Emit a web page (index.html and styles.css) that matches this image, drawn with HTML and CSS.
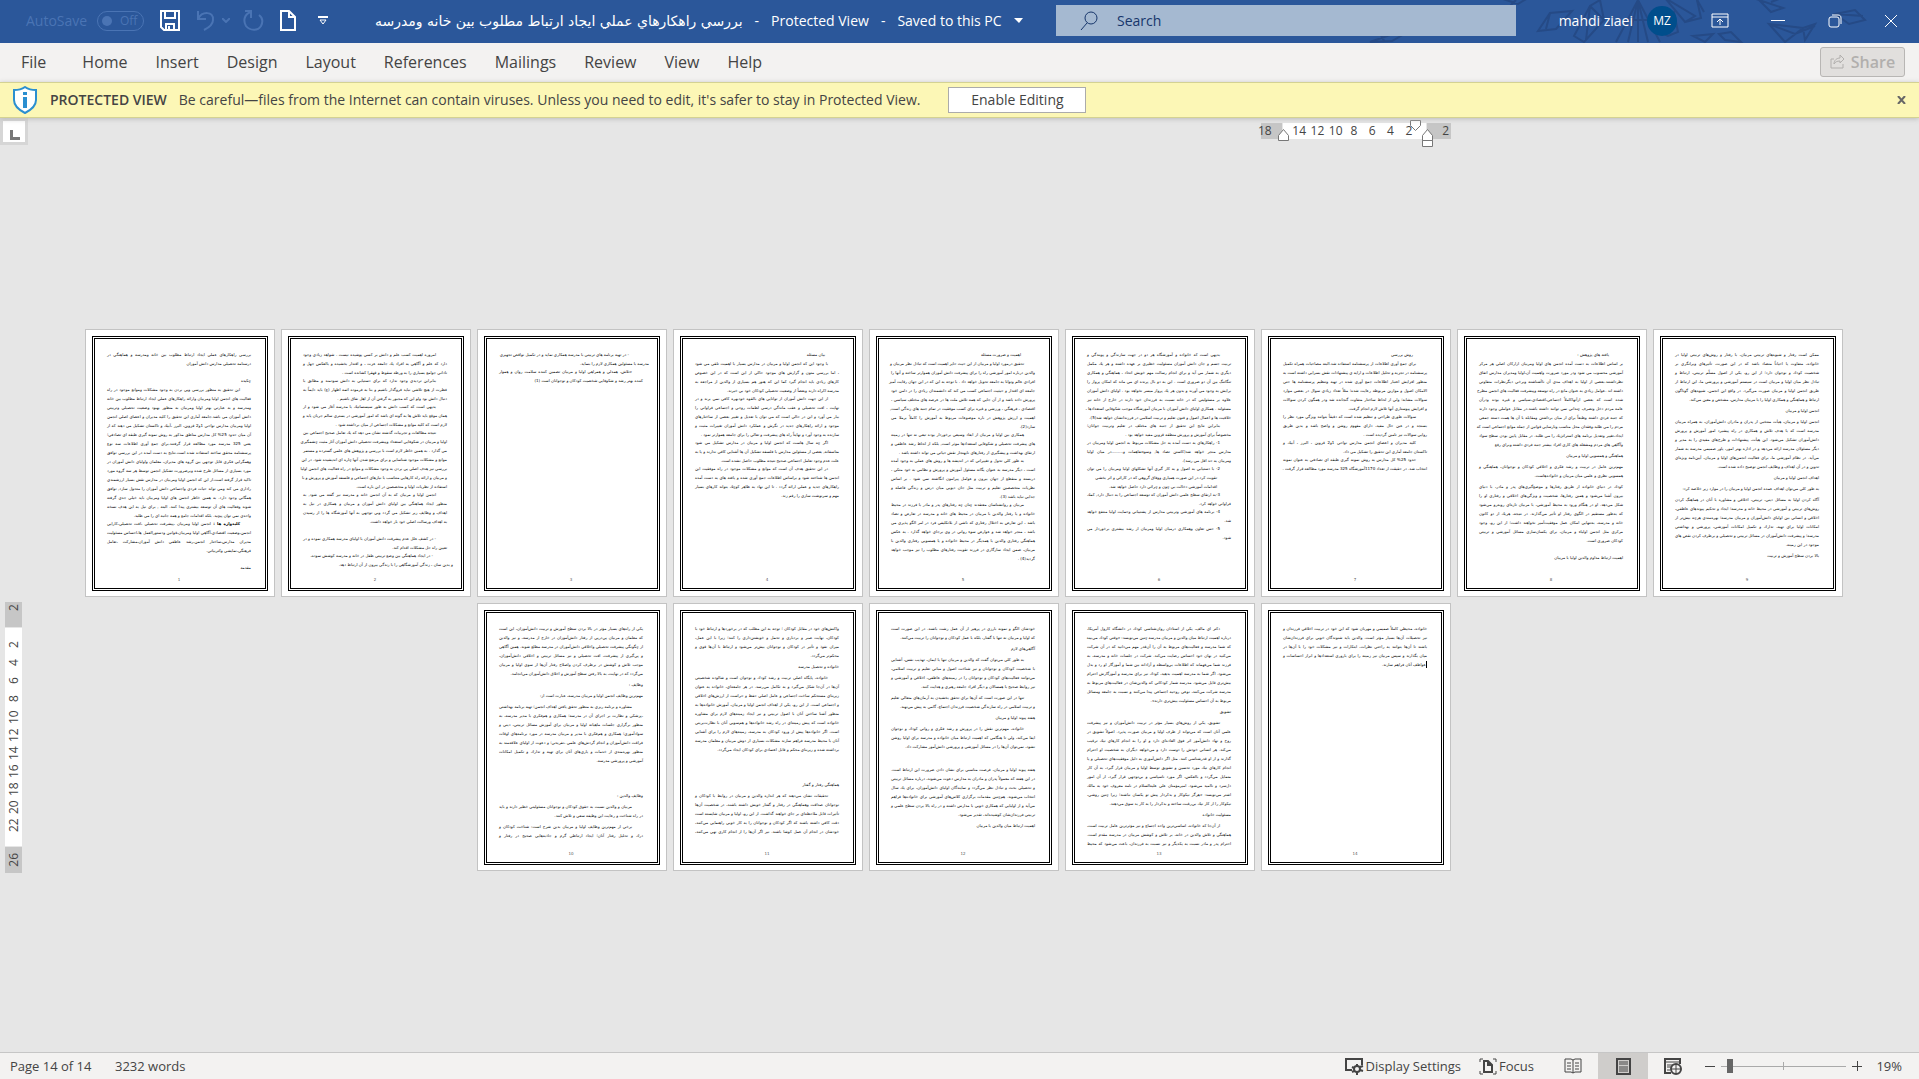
FILE: index.html
```html
<!DOCTYPE html>
<html lang="en">
<head>
<meta charset="utf-8">
<title>Word - Protected View</title>
<link rel="stylesheet" href="styles.css">
</head>
<body>
<header class="titlebar">
  <svg class="titlebar-art" width="340" height="43" viewBox="0 0 340 43" fill="none" stroke="#254a86" stroke-width="2">
    <path d="M4 42l20-7 16-2-14 8zM15 36l4 6M134 -2l18 6 10-6M142 8l8-8M172 31l12-18 22-2-16 18zM184 13l-4 16M184 13l22-2M208 36l16-30 10-6 4 20-20 22zM224 6l-4 34M224 6l14 14M250 42l22-42 22 42M272 0v42M262 42l10-42 10 42M262 20l20 0M290 30l18-18 4 20-10 4zM308 12l-8 22"/>
    <path d="M330 -2l8 14"/>
  </svg>
  <svg class="titlebar-art art-right" width="260" height="43" viewBox="0 0 260 43" fill="none" stroke="#254a86" stroke-width="2">
    <path d="M6 -2l30 18-10 6-20-24M26 22l16-4-4-18M60 34l12-2 10 10-16-2zM34 36l20-2-8 8zM94 -2l30 10-12 4-14-14M112 12l12-4M112 2l16-6M110 24l34 4-18 14zM110 24l26 10 20-8M144 28l12-4-10 16zM176 14l20-4 10 10-16 4zM176 14l28 2"/>
  </svg>
  <div class="quick">
    <span class="autosave">AutoSave</span>
    <button class="toggle" disabled><span class="knob"></span>Off</button>
    <button class="tool save" aria-label="Save"><svg width="20" height="21" viewBox="0 0 20 21" fill="none" stroke="#fff" stroke-width="2"><path d="M1 1h18v19H4l-3-3zM5 1v7h10V1M6 20v-6h8v6M9 20v-4"/></svg></button>
    <button class="tool undo" aria-label="Undo" disabled><svg width="20" height="21" viewBox="0 0 20 21" fill="none" stroke="#4a74b4" stroke-width="2"><path d="M2 1v8h8M2 9C6 1 18 1 17 10c0 5-5 8-9 10"/></svg></button>
    <button class="tool chev" aria-label="Undo list" disabled><svg width="8" height="5" viewBox="0 0 8 5" fill="none" stroke="#4a74b4" stroke-width="2"><path d="M0 0l4 4 4-4"/></svg></button>
    <button class="tool redo" aria-label="Repeat" disabled><svg width="21" height="21" viewBox="0 0 21 21" fill="none" stroke="#4a74b4" stroke-width="2"><path d="M2 1h6v7M8 2C1 4 0 11 3 16c4 5 12 5 15 0 2-4 2-8-2-11"/></svg></button>
    <button class="tool doc" aria-label="New"><svg width="16" height="21" viewBox="0 0 16 21" fill="none" stroke="#fff" stroke-width="2"><path d="M1 1h8l6 6v13H1zM9 1v6h6"/></svg></button>
    <button class="tool more" aria-label="Customize"><svg width="10" height="9" viewBox="0 0 10 9" fill="none" stroke="#fff" stroke-width="1"><path d="M0 1h10" stroke-width="2"/><path d="M2 4h6L5 8z"/></svg></button>
  </div>
  <button class="doc-title"><span dir="rtl" class="fa">بررسي راهكارهاي عملي ايجاد ارتباط مطلوب بين خانه ومدرسه</span><span>-</span><span>Protected View</span><span>-</span><span>Saved to this PC</span><svg width="9" height="5" viewBox="0 0 9 5" fill="#fff"><path d="M0 0h9L5 5z"/></svg></button>
  <label class="search"><svg width="18" height="20" viewBox="0 0 18 20" fill="none" stroke="#17366b" stroke-width="1"><circle cx="11" cy="7" r="6"/><path d="M7 12l-6 7"/></svg><input type="text" placeholder="Search" aria-label="Search"></label>
  <div class="account"><span>mahdi ziaei</span><span class="avatar">MZ</span></div>
  <div class="window">
    <button aria-label="Ribbon display options"><svg width="18" height="15" viewBox="0 0 18 15" fill="none" stroke="#fff" stroke-width="1"><path d="M1 1h16v13H1zM1 4h16M9 12V6M6 9l3-3 3 3"/></svg></button>
    <button aria-label="Minimize"><svg width="14" height="15" viewBox="0 0 14 15" fill="#fff"><path d="M0 7h14v1H0z"/></svg></button>
    <button aria-label="Restore"><svg width="14" height="14" viewBox="0 0 14 14" fill="none" stroke="#fff"><rect x="1" y="3" width="10" height="10" rx="2"/><path d="M4 1h6c2 0 3 1 3 3v6"/></svg></button>
    <button aria-label="Close"><svg width="14" height="14" viewBox="0 0 14 14" stroke="#fff"><path d="M1 1l12 12M13 1L1 13"/></svg></button>
  </div>
</header>

<nav class="tabs">
  <a href="#">File</a><a href="#">Home</a><a href="#">Insert</a><a href="#">Design</a><a href="#">Layout</a><a href="#">References</a><a href="#">Mailings</a><a href="#">Review</a><a href="#">View</a><a href="#">Help</a>
  <button class="share" disabled><svg width="15" height="15" viewBox="0 0 15 15" fill="none" stroke="#b1afad" stroke-width="1"><path d="M4 5H1v9h12v-4M4 10c0-4 3-6 6-6V1l4 4-4 4V7c-3 0-5 1-6 3z"/></svg>Share</button>
</nav>

<section class="notice">
  <svg width="24" height="28" viewBox="0 0 24 28"><path d="M12 1c3 2 7 3 11 3v10c0 6-5 10-11 13C6 24 1 20 1 14V4c4 0 8-1 11-3z" fill="#fff" stroke="#2b8fd0" stroke-width="2"/><path d="M12 11v11M12 6v3" stroke="#2b8fd0" stroke-width="4"/></svg>
  <strong>PROTECTED VIEW</strong>
  <span class="notice-text">Be careful—files from the Internet can contain viruses. Unless you need to edit, it's safer to stay in Protected View.</span>
  <button class="enable">Enable Editing</button>
  <button class="dismiss" aria-label="Close message"><svg width="9" height="8" viewBox="0 0 9 8" stroke="#666" stroke-width="2"><path d="M1 0l7 8M8 0L1 8"/></svg></button>
</section>

<main class="canvas">
  <div class="ruler-row">
    <button class="tab-kind" aria-label="Tab type"></button>
    <div class="ruler-track">
      <div class="hruler">
        <div class="margin left"><span>18</span></div>
        <div class="body"><span>14</span><span>12</span><span>10</span><span>8</span><span>6</span><span>4</span><span>2</span></div>
        <div class="margin right"><span>2</span></div>
        <svg class="marker" width="190" height="32" viewBox="0 0 190 32" fill="#fff" stroke="#777"><path d="M17.500 22.500v-5l5-6 5 6v5zM149.500 2.500h10v5l-5 5-5-5zM161.500 22.500v-5l5-6 5 6v5zM161.500 22.500h10v6h-10z"/></svg>
      </div>
    </div>
  </div>
  <div class="stage">
    <div class="workspace">
      <div class="vruler">
        <div class="margin top"><span>2</span></div>
        <div class="body"><span>2</span><span>4</span><span>6</span><span>8</span><span>10</span><span>12</span><span>14</span><span>16</span><span>18</span><span>20</span><span>22</span></div>
        <div class="margin bottom"><span>26</span></div>
      </div>
      <div class="pages" lang="fa">
<article class="sheet"><div class="frame">
<h2 class="wide">بررسي راهكارهاي عملي ايجاد ارتباط مطلوب بين خانه ومدرسه و هماهنگي در
<span>درسنامه تحصيلي مدارس دانش آموزان</span></h2>
<h2 class="blank">چكيده</h2>
<p>اين تحقيق به منظور بررسي وپي بردن به وجود مشكلات وموانع موجود در راه
فعاليت هاي انجمن اوليا ومربيان وارائه راهكارهاي عملي ايجاد ارتباط مطلوب بين خانه
ومدرسه و به عبارتي بهتر اوليا ومربيان به منظور بهبود وضعيت تحصيلي وتربيتي
دانش آموزان مي باشد.جامعه آماري اين تحقيق را كليه مديران و اعضاي اصلي انجمن
اوليا ومربيان مدارس نواحي 1و2 قزوين، البرز ،آبيك و تاكستان تشكيل مي دهند كه از
آن ميان حدود 25% كل مدارس مناطق مذكور به روش نمونه گيري طبقه اي تصادفي؛
يعني 325 مدرسه مورد مطالعه قرار گرفتند.براي جمع آوري اطلاعات سه نوع
پرسشنامه محقق ساخته استفاده شده است.نتايج به دست آمده در اين بررسي توافق
وهمگرايي فكري قابل توجهي بين گروه هاي مديران، معلمان واولياي دانش آموزان در
مورد بسياري از مسائل طرح شده وبرضرورت تشكيل انجمن توسط هر سه گروه مورد
تاكيد قرار گرفته است.از اين كه انجمن اوليا ومربيان در مدارس نقش بسيار ارزشمندي
راداري مي كند ومي تواند حيات فردي واجتماعي دانش آموزان را متحول سازد, توافق
همگاني وجود دارد. به همين خاطر انجمن هاي اوليا ومربيان بايد خيلي جدي گرفته
شوند وفعاليت هاي آن توسعه بيشتري پيدا كنند. البته , براي نيل به اين هدف نسخه
<span>واحدي نمي توان پيچيد. بلكه اقدامات جامع و همه جانبه اي را مي طلبد.</span></p>
<p><b>كليدواژه ها :</b> انجمن اوليا ومربيان ،پيشرفت تحصيلي ،افت تحصيلي،كارايي
انجمن،وضعيت اقتصادي،آگاهي اوليا ومربيان،قوانين ودستورالعمل ها،احساس مسئوليت
مديران مدارس،ساختار انجمن،رشد عاطفي دانش آموزان،مشاركت ،تعامل
<span>فرهنگي،نمايشي وكتربياتي.</span></p>
<h2 class="blank">مقدمه</h2>
<footer>1</footer></div></article>

<article class="sheet"><div class="frame">
<p>امروزه اهميت كسب علم و دانش بر كسي پوشيده نيست . شواهد زيادي وجود
دارد كه علم و آگاهي به افراد يك جامعه عزت ، و اقتدار بخشيده و بالعكس جهل و
<span>ناداني جوامع بسياري را به ورطه سقوط و قهقرا كشانده است .</span></p>
<p>بنابراين ترديدي وجود ندارد كه براي دستيابي به دانش سودمند و مطابق با
فطرت از هيچ تلاشي نبايد فروگذار باشيم و بنا به فرموده ائمه اطهار (ع) بايد دايماً به
<span>دنبال دانش بود ولو اين كه مجبور به گرفتن آن از اهل نفاق باشيم .</span></p>
<p>بديهي است كه كسب دانش به طور سيستماتيك با مدرسه آغاز مي شود و از
همان موقع بايد تلاش ها به گونه اي باشد كه امور آموزشي در بستري سالم جريان يابد و
<span>لازم است كه كليه موانع و مشكلات اجتماعي از ميان برداشته شود .</span></p>
<p>نتيجه مطالعات و تجربيات گذشته نشان مي دهد كه يك تعامل صحيح اجتماعي بين
اوليا و مربيان در شكوفايي استعداد وپيشرفت تحصيلي دانش آموزان آثار مثبت چشمگيري
مي گذارد . به همين خاطر لازم است با بررسي و پژوهش هاي علمي گسترده و مستمر
موانع و مشكلات موجود شناسايي و براي مرتفع شدن آنها چاره اي انديشيده شود. در اين
بررسي نيز هدف اصلي پي بردن به وجود مشكلات و موانع در راه فعاليت هاي انجمن اوليا
و مربيان و ارائه راه كارهايي متناسب با نيازهاي اجتماعي و فلسفه آموزش و پرورش و با
<span>استفاده از نظريات اوليا و متخصصين در اين باره است.</span></p>
<p>انجمن اوليا و مربيان كه به آن انجمن خانه و مدرسه نيز گفته مي شود, به
منظور ايجاد هماهنگي بين اولياي دانش آموزان و مربيان و همكاري در نيل به
اهداف و وظايف زير تشكيل مي گردد وبي توجهي به آنها آموزشگاه ها را از رسيدن
<span>به اهداف ورسالت اصلي خود باز خواهد داشت.</span></p>
<p class="blank">- در كشف علل عدم پيشرفت دانش آموزان با اولياي مدرسه همكاري نموده و در
<span>تعيين راه حل مشكلات اقدام كند.</span></p>
<p><span class="in">- در ايجاد هماهنگي بين وضع تربيتي طفل در خانه و مدرسه كوشش نموده،</span><span class="out">و بدين سان ، زندگي آموزشگاهي را با زندگي بيرون از آن ارتباط دهد.</span></p>
<footer>2</footer></div></article>

<article class="sheet"><div class="frame">
<p><span class="in">- در تهيه برنامه هاي تربيتي با مدرسه همكاري نمايد و در تكميل نواقص تجهيزي</span><span class="out">مدرسه با مسئولين همكاري لازم را بنمايد.</span></p>
<p>«تلاش، همدلي و همراهي اوليا و مربيان تضمين كننده سلامت روان و هموار
<span>كننده بهتر رشد و شكوفايي شخصيت كودكان و نوجوانان است (1)</span></p>
<footer>3</footer></div></article>

<article class="sheet"><div class="frame">
<h2 class="in">بيان مسئله</h2>
<p>با وجود اين كه انجمن اوليا و مربيان در مدارس بسيار با اهميت تلقي مي شود
، اما بررسي متون و گزارش هاي موجود حاكي از اين است كه در اين خصوص
كارهاي زيادي بايد انجام گيرد كما اين كه هنوز هم بسياري از والدين از مراجعه به
<span>مدرسه اكراه دارند وبعضاً از وضعيت تحصيلي كودكان خود بي خبرند.</span></p>
<p>از اين جهت دانش آموزان از توانايي هاي بالقوه خودبهره كافي نمي برند و در
نهايت ، افت تحصيلي و عقب ماندگي درسي لطمات روحي و اجتماعي فراواني را
ببار مي آورد و اين در حالي است كه مي توان با تعديل و تغيير بعضي از ساختارهاي
موجود و ارائه راهكارهاي جديد در نگرش و عملكرد دانش آموزان تغييرات مثبت و
<span>سازنده به وجود آورد و نهايتاً راه هاي پيشرفت و تعالي را براي جامعه هموارتر نمود .</span></p>
<p>اگر چه سال هاست كه انجمن اوليا و مربيان در مدارس تشكيل مي شود
متاسفانه, بعضي از مسئولين مدارس با فلسفه تشكيل آن ها آشنايي كافي ندارند و يا به
<span>علت عدم وجود تعامل اجتماعي صحيح نتيجه مطلوب حاصل نشده است.</span></p>
<p>در اين تحقيق هدف آن است كه موانع و مشكلات موجود در راه موفقيت اين
انجمن ها شناخته شود و براساس اطلاعات جمع آوري شده و يافته هاي به دست آمده
راهكارهاي جديد و عملي ارائه گردد . تا اين نهاد به ظاهر كوچك بتواند كارهاي بسيار
<span>مهم و سرنوشت سازي را رقم زند.</span></p>
<footer>4</footer></div></article>

<article class="sheet"><div class="frame">
<h2 class="in">اهميت و ضرورت مسئله</h2>
<p>تحقيق درمورد اوليا و مربيان از اين حيث حايز اهميت است كه تبادل نظر مربيان و
والدين درباره امور آموزشي راه را براي پيشرفت دانش آموزان هموارتر ساخته و آنها را
افرادي عالم وتوانا به جامعه تحويل خواهد داد . با توجه به اين كه در اين جهان رقابت آميز
جامعه اي اقتدار و حيثيت اجتماعي كسب مي كند كه دانشمندان زيادي را در دامن خود
پرورش داده باشد و از آن جايي كه همه تلاش ملت ها در عرصه هاي مختلف سياسي ،
اقتصادي ، فرهنگي ، ورزشي و غيره براي كسب موفقيت در تمام جنبه هاي زندگي است,
اهميت و ارزش پژوهش در باره موضوعات مربوط به آموزش را كاملاً برملا مي
<span>سازد(2).</span></p>
<p>همكاري بين اوليا و مربيان از ابعاد وسيعي برخوردار بوده تبعي نه تنها در زمينه
هاي پيشرفت تحصيلي و شكوفايي استعدادها موثر است, بلكه از لحاظ رشد عاطفي و
<span>ارتقاي بهداشت و پيشگيري از رفتارهاي نابهنجار نقش حياتي مي تواند داشته باشد .</span></p>
<p>به طور كلي تحول و تغييراتي كه در انديشه ها و روش هاي عملي به وجود آمده
است ، ديگر مدرسه به عنوان يگانه مسئول آموزش و پرورش و نظامي به خود متكي ،
دربسته و منقطع از جهان بيرون و عوامل پيرامون انگاشته نمي شود . بر اساس
نظريات متخصصين تعليم و تربيت مثل جان ديويي ميان درس و زندگي فاصله و
<span>جدايي نبايد باشد (3).</span></p>
<p>مربيان و روانشناسان معتقدند چنان چه رفتارهاي پدر و مادر با فرزند در محيط
خانواده و يا رفتار والدين با مربيان در محيط هاي خانه و مدرسه در تعارض و تضاد
باشد ، اين تعارض به اختلال رفتاري كه ناشي از بلاتكليفي فرد در امر الگو پذيري مي
باشد ، منجر خواهد شد و عوارض سوء رواني در وي برجاي خواهد گذارد . به عكس
هماهنگي رفتاري والدين با همديگر در محيط خانواده و يا همسويي رفتاري والدين با
مربيان، ضمن ايجاد سازگاري در فرزند تقويت رفتارهاي مطلوب را نيز موجب خواهد
<span>گرديد(4) .</span></p>
<footer>5</footer></div></article>

<article class="sheet"><div class="frame">
<p>بديهي است كه خانواده و آموزشگاه هر دو در جهت سازندگي و پويندگي و
تربيت جسم و جان دانش آموزان مسئوليت خطيري بر عهده داشته و هر يك مكمل
ديگري به شمار مي آيد و براي انجام رسالت مهم خويش اتحاد ، هماهنگي و همكاري
تنگاتنگ بين آن دو ضروري است . اين به دو بال پرنده اي مي ماند كه امكان پرواز را
برايش به وجود مي آورند و بدون هر يك پرواز ميسر نخواهد بود . اولياي دانش آموزان
علاوه بر مسئوليتي كه در خانه نسبت به فرزندان خود دارند در خارج از خانه نيز
مسئولند . همكاري اولياي دانش آموزان با مربيان آموزشگاه موجب شكوفايي استعدادها ،
<span>خلاقيت ها و اعمال اصول و فنون تعليم و تربيت اسلامي در فرزندانشان خواهد شد(5).</span></p>
<p>بنابراين نتايج اين تحقيق از جنبه هاي مختلف در تعليم وتربيت جوانان؛
<span>مخصوصاً براي آموزش و پرورش منطقه قزوين مفيد خواهد بود .</span></p>
<p>1- راهكارهاي به دست آمده به حل مشكلات مربوط به انجمن اوليا ومربيان در
مدارس منجر خواهد شد(كاستن تضاد ها, وسوءتفاهمات و.........در ميان اوليا
<span>ومربيان به حد اقل مي رسد).</span></p>
<p>2- با دستيابي به اصول و به كار گيري آنها تشكلهاي اوليا ومربيان را مي توان
<span class="in">تقويت كرد.در اين صورت همياري ووفاق گروهي كه در كارائي و اثر بخشي</span><span class="in">اقدامات آموزشي دخالت بي چون و چرائي دارد حاصل خواهد شد.</span></p>
<p>3-به ارتقاي سطح علمي دانش آموزان كه توسعه اجتماعي را به دنبال دارد, كمك
<span>فراواني خواهد كرد.</span></p>
<p>4- برنامه هاي آموزشي وتربيتي مدارس از پشتيباني وحمايت اوليا منتفع خواهد
<span>شد.</span></p>
<p>5- حس تعاون وهمكاري درميان اوليا ومربيان از رشد بيشتري برخوردار مي
<span>شود.</span></p>
<footer>6</footer></div></article>

<article class="sheet"><div class="frame">
<h2 class="in">روش بررسي</h2>
<p>براي جمع آوري اطلاعات از پرسشنامه استفاده شد.البته مصاحبات همراه تكميل
پرسشنامه در تجزيه و تحليل اطلاعات و ارايه ي پيشنهادات نقش بسزايي داشته است به
منظور افزايش اعتبار اطلاعات جمع آوري شده در تهيه وتنظيم پرسشنامه ها حتي
الامكان اصول و موازين مربوطه رعايت شده؛ مثلاً تعداد زيادي سوال در بعضي موارد
سوالات مشابه؛ ولي از لحاظ ساختار متفاوت گنجانده شد ودر همگون كردن سوالات
<span>و افزايش پيوستاري آنها تلاش لازم انجام گرفت.</span></p>
<p>سوالات طوري طراحي و تنظيم شده است كه دقيقاً بتوانند ويژگي مورد نظر را
بسنجد و در عين حال مفيد، داراي مفهوم روشن و واضح باشد و بدين طريق
<span>روايي سوالات نيز تامين گرديده است .</span></p>
<p>كليه مديران و اعضاي انجمن مدارس نواحي 1و2 قزوين ، البرز ، آبيك و
<span>تاكستان جامعه آماري اين تحقيق را تشكيل مي داد.</span></p>
<p>حدود 25% كل مدارس به روش نمونه گيري طبقه اي تصادفي به عنوان نمونه
<span>انتخاب شد. در حقيقت از تعداد 1170آموزشگاه 325 مدرسه مورد مطالعه قرار گرفت .</span></p>
<footer>7</footer></div></article>

<article class="sheet"><div class="frame">
<h2 class="in">يافته هاي پژوهش :</h2>
<p class="flush">بر اساس اطلاعات به دست آمده انجمن هاي اوليا ومربيان ازاركان اصلي هر مركز
آموزشي محسوب مي شود ودر مورد ضرورت واهميت آن،اوليا ومديران مدارس اتفاق
نظرداشتند.بعضي از اوليا به اهداف مدي آن ناآشناشته وبرخي ديگرنظرات متفاوتي
داشته اند .عوامل زيادي به عنوان مانع در راه توسعه وپيشرفت فعاليت هاي انجمن مطرح
شده است كه بعضي ازآنهاكاملاً اجتماعي،اقتصادي،سياسي و غيره بوده ودرآن
عامه مردم دخل وتصرف چنداني نمي توانند داشته باشند.در مقابل عواملي وجود دارند
كه جنبه فردي داشته وطبعاً براي از ميان برداشتن ومقابله با آن ها همت دسته جمعي
مردم را مي طلبد.وفقدان محل مناسب ونارسايي قوانين از جمله موانع اجتماعي است كه
ايجاد،تغيير وتعديل برنامه هاي استراتژيك را مي طلبد. در مقابل پايين بودن سطح سواد
<span>وآگاهي هاي مردم ومشغله هاي كاري افراد بيشتر جنبه فردي داشته وبراي رفع</span></p>
<p class="flush gap"><span>هماهنگي و همسويي اوليا و مربيان</span></p>
<p class="flush gap">مهم‌ترين عامل در تربيت و رشد فكري و اخلاقي كودكان و نوجوانان، هماهنگي و
<span>همسويي نظري و علمي ميان مربيان و خانواده‌هاست.</span></p>
<p class="flush gap">كودك در دنياي خانواده از طريق رفتارها و موضع‌گيري‌هاي پدر و مادر، با دنياي
بيرون آشنا مي‌شود و همين رفتارها، شخصيت و ويژگي‌هاي اخلاقي و رفتاري او را
شكل مي‌دهد. او در هنگام ورود به محيط آموزشي، با مربيان تازه‌اي روبه‌رو مي‌شود
كه به‌طور مستقيم در الگوي رفتار او تأثير مي‌گذارند. در نتيجه، هريك از دو كانون
خانه و مدرسه، به‌تنهايي امكان عمل موفقيت‌آميز نخواهند داشت؛ از اين رو، وجود
مركزي مثل انجمن اولياء و مربيان، براي يكسان‌سازي مسائل آموزشي و تربيتي
<span>كودكان ضروري است.</span></p>
<h2 class="blank">اهميت ارتباط مداوم والدين اوليا با مربيان</h2>
<footer>8</footer></div></article>

<article class="sheet"><div class="frame">
<p class="flush">ممكن است رفتار و شيوه‌هاي تربيتي مربيان، با رفتار و روش‌هاي تربيتي اوليا در
خانواده، متفاوت يا احياناً متضاد باشد كه در اين صورت، تأثيرهاي ويرانگري بر
شخصيت كودك و نوجوان دارد؛ از اين رو، يكي از اصول مسلّم تربيتي، ارتباط و
تبادل نظر ميان اوليا و مربيان است در سيستم آموزشي و پرورشي ما، اين ارتباط از
طريق انجمن اوليا و مربيان صورت مي‌گيرد. در واقع اين انجمن، شيوه‌هاي گوناگون
<span>ارتباط و هماهنگي و همكاري اوليا را با مربيان مدارس، مشخص و معين مي‌كند.</span></p>
<h2 class="gap">انجمن اوليا و مربيان</h2>
<p class="flush gap">انجمن اوليا و مربيان، هيأت منتخبي از پدران و مادران دانش‌آموزان، به همراه مربيان
مدرسه است كه با هدف تلاش و همكاري در راه پيشبرد امور آموزش و پرورش
دانش‌آموزان تشكيل مي‌شود. اين هيأت، پيشنهادات و طرح‌هاي مفيدي را به مدير و
ديگر مسئولان مدرسه ارائه مي‌دهد و در اداره بهتر امور، ياور صميمي مدرسه به شمار
مي‌آيد. در نظام آموزشي ما، براي فعاليت انجمن‌هاي اوليا و مربيان، آيين‌نامه ويژه‌اي
<span>تدوين و در آن اهداف و وظايف انجمن توضيح داده شده است.</span></p>
<h2 class="gap">اهداف انجمن اوليا و مربيان</h2>
<p class="flush gap"><span>به طور كلي مي‌توان اهداف عمده انجمن اوليا و مربيان را در موارد زير خلاصه كرد:</span></p>
<p class="flush gap">آگاه كردن اوليا به مسائل ديني، تربيتي، اخلاقي و مشاوره با آنان در هماهنگ كردن
روش‌هاي تربيتي و آموزشي در محيط خانه و مدرسه؛ ايجاد و تحكيم پيوندهاي عاطفي،
اخلاقي و انساني بين اولياي دانش‌آموزان و مربيان مدرسه؛ بهره‌مندي هرچه بيش‌تر از
امكانات اوليا براي تهيه، تدارك و تكميل امكانات آموزشي، پرورشي و بهداشتي
مدرسه؛ و پيشرفت دانش‌آموزان در مسائل تربيتي و تحصيلي و برطرف كردن نقص هاي
<span>موجود در اين زمينه.</span></p>
<h2 class="gap">بالا بردن سطح آموزش و تربيت</h2>
<footer>9</footer></div></article>

<article class="sheet"><div class="frame">
<p class="flush">يكي از راه‌هاي بسيار مؤثر در بالا بردن سطح آموزش و تربيت دانش‌آموزان، اين است
كه معلمان و مربيان پي‌درپي از رفتار دانش‌آموزان در خارج از مدرسه، و نيز والدين
از چگونگي پيشرفت تحصيلي واخلاقي دانش‌آموزان در مدرسه مطلع شوند. همين آگاهي
و پي‌گيري از پيشرفت، افت تحصيلي و نيز مسائل تربيتي و اخلاقي دانش‌آموزان،
موجب تلاش و كوشش در برطرف كردن واصلاح رفتار آن‌ها از سوي اوليا و مربيان
<span>مي‌گردد كه در نهايت، به بالا رفتن سطح آموزش و اخلاق دانش‌آموزان مي‌انجامد.</span></p>
<h2 class="gap">وظايف :</h2>
<p class="flush gap"><span>مهم‌ترين وظايف انجمن اوليا و مربيان مدرسه، عبارت است از:</span></p>
<p class="gap">مشاوره و برنامه ريزي به منظور تحقق يافتن اهداف انجمن؛ تهيه برنامه بهداشتي
،پزشكي و نظارت بر اجراي آن در مدرسه؛ همكاري و هم‌فكري با مدير مدرسه، به
منظور برگزاري جلسات ماهيانه اوليا و مربيان براي آموزش مسائل تربيتي، ديني و
سوادآموزي؛ همكاري و هم‌فكري با مدير و مربيان مدرسه در مورد برنامه‌هاي اوقات
فراغت دانش‌آموزان و انجام گردش‌هاي علمي ،تفريحي؛ و دعوت از اولياي علاقه‌مند به
منظور بهره‌مندي از خدمات و ياري‌هاي آنان براي تهيه و تدارك و تكميل امكانات
<span>آموزشي و پرورشي مدرسه.</span></p>
<h2 class="blank double">وظايف والدين :</h2>
<p class="gap">مربيان و والدين نسبت به حقوق كودكان و نوجوانان مسئوليتي خطير دارند و بايد
<span>در راه شناخت و رعايت اين وظيفه سعي و تلاش كنند.</span></p>
<p class="gap">برخي از مهم‌ترين وظايف اوليا و مربيان بدين شرح است: شناخت كودكان و
درك و تحليل رفتار آنان؛ ايجاد ارتباطي گرم و جاذبه‌هايي صحيح در رفتار و</p>
<footer>10</footer></div></article>

<article class="sheet"><div class="frame">
<p class="flush">واكنش‌هاي خود در مقابل كودكان ؛ توجه به اين مطلب كه در برخوردها و ارتباط خود با
كودكان، نهايت صبر و بردباري و تحمل و خويشتن‌داري را كنند؛ زيرا با اين عمل،
ميزان نفوذ و تأثير در كودكان و نوجوانان بيش‌تر مي‌شود و ارتباط با آن‌ها قوي و
<span>محكم‌تر مي‌گردد.</span></p>
<h2 class="gap">خانواده و تحصيل مدرسه</h2>
<p class="gap">خانواده، پايگاه اصلي تربيت و رشد كودك و نوجوان است و شالوده شخصيتي
آن‌ها در آن‌جا شكل مي‌گيرد و به تكامل مي‌رسد. در هر جامعه‌اي، خانواده به عنوان
زيربناي مستحكم ساخت اجتماعي و عامل اصلي حفظ و حراست از ارزش‌هاي اخلاقي
و اجتماعي است. از اين رو، يكي از اهداف انجمن اوليا و مربيان، آموزش خانواده‌ها به
منظور آشنا ساختن آنان با اصول تربيتي و نيز ايجاد زمينه‌هاي لازم براي مشاوره
خانواده است كه پيش زمينه‌اي در راه رشد خانواده‌ها و هم‌سويي آنان با نظارت‌بريتي
است. اگر خانواده‌ها پيش از ورود كودكان به مدرسه، زمينه‌هاي لازم را براي آشنايي
آنان با محيط مدرسه فراهم سازند مشكلات بسياري از دوش مربيان و معلمان مدرسه
<span>برداشته شده و زيربناي محكم و قابل اعتمادي براي كودكان ايجاد مي‌گردد.</span></p>
<h2 class="blank double">هماهنگي رفتار و گفتار</h2>
<p class="gap">تحقيقات نشان مي‌دهند كه هر اندازه والدين و مربيان در روابط با كودكان و
نوجوانان صداقت وهماهنگي در رفتار و گفتار خويش داشته باشند، در شخصيت آن‌ها
تأثيرات قابل ملاحظه‌اي بر جاي خواهند گذاشت. از اين رو، اوليا و مربيان شايسته است
دقت كافي داشته باشند كه اگر كودكان و نوجوانان را به كار خوبي راهنمايي مي‌كنند،
خودشان در انجام آن عمل كوشا باشند. نيز اگر آن‌ها را از انجام كاري نهي مي‌كنند،</p>
<footer>11</footer></div></article>

<article class="sheet"><div class="frame">
<p class="flush">خودشان الگو و نمونه بارزي در پرهيز از آن عمل زشت باشند. در اين صورت است
<span>كه اوليا و مربيان نه تنها با گفتار، بلكه با عمل كودكان و نوجوانان را تربيت مي‌كنند.</span></p>
<h2 class="gap">آگاهي‌هاي لازم</h2>
<p class="gap">به طور كلي مي‌توان گفت كه والدين و مربيان تنها با ايمان، تهذيب نفس، آشنايي
با شخصيت كودكان و نوجوانان و نيز شناخت اصول و مباني تعليم و تربيت اسلامي،
مي‌توانند فعاليت‌هاي كودكان و نوجوانان را در زمينه‌هاي عاطفي، اخلاقي و آموزشي و
<span>نيز روابط صحيح با همسالان و ديگر افراد جامعه رهبري و هدايت كنند.</span></p>
<p class="gap">تنها در اين صورت است كه آن‌ها براي تحقق بخشيدن به آرمان‌هاي متعالي تعليم
<span>و تربيت اسلامي در راه سازندگي شخصيت فرزندان اجتماع، گامي به پيش مي‌نهند.</span></p>
<h2 class="gap">هفته پيوند اوليا و مربيان</h2>
<p class="gap">خانواده، مهم‌ترين نقش را در پرورش و رشد فكري و رواني كودك و نوجوان
ايفا مي‌كند، ولي تا هنگامي كه اهميت ارتباط ميان خانواده و مدرسه براي اوليا روشن
<span>نشود، نمي‌توان آن‌ها را در مسائل آموزشي و پرورشي دانش‌آموز مشاركت داد.</span></p>
<p class="flush blank more">هفته پيوند اوليا و مربيان، فرصت مناسبي براي نشان دادن ضرورت اين ارتباط است.
در اين هفته كه معمولاً پدران و مادران به مدارس دعوت مي‌شوند، درباره مسائل تربيتي
و تحصيلي بحث و تبادل نظر مي‌گردد و نمايندگان اولياي دانش‌آموزان، براي يك سال
انتخاب مي‌شوند. هم‌چنين مقدمات برگزاري كلاس‌هاي آموزشي براي خانواده‌ها فراهم
مي‌آيد و از اوليايي كه همكاري خوبي با مدارس داشته و در راه بالا بردن سطح علمي و
<span>تربيتي فرزندان‌شان كوشيده‌اند، تقدير مي‌شود.</span></p>
<h2 class="gap">اهميت ارتباط ميان والدين با مربيان</h2>
<footer>12</footer></div></article>

<article class="sheet"><div class="frame">
<p>دكتر اي مالف، يكي از استادان روان‌شناسي كودك در دانشگاه كارول آمريكا،
درباره اهميت ارتباط ميان والدين و مربيان مدرسه چنين مي‌نويسد: «وقتي كودك مي‌بيند
كه شما مدرسه و فعاليت‌هاي مربوط به آن را آن‌قدر مهم مي‌دانيد كه در آن شركت
مي‌كنيد در نهان خود احساس رضايت مي‌كند. شركت در جلسات خانه و مدرسه، به
فرزند شما مي‌فهماند كه اطلاعات بي‌واسطه و آزادانه بين شما و آموزگار او رد و بدل
مي‌شود. اگر شما به مدرسه اهميت بدهيد، كودك نيز براي مدرسه و آموزگارش احترام
بيش‌تري قايل مي‌شود. مدرسه شمار كودكاني كه والدين‌شان در فعاليت‌هاي مربوط به
مدرسه شركت مي‌كنند، نوعي روحيه اجتماعي پيدا مي‌كنند و نسبت به جامعه ومسائل
<span>مربوط به آن احساس مسئوليت بيش‌تري دارند».</span></p>
<h2 class="gap">تشويق</h2>
<p class="gap">تشويق، يكي از روش‌هاي بسيار مؤثر در تربيت دانش‌آموزان و نيز پيشرفت
علمي آنان است كه مي‌تواند از طرف اوليا و مربيان صورت پذيرد. اصولاً تشويق در
روح و نهاد دانش‌آموز اثر فوق العاده‌اي دارد و او را به انجام كارهاي نيك ترغيب
مي‌كند. هر انساني خودش را دوست دارد و مي‌خواهد ديگران به شخصيت او احترام
گذارند و از او قدرشناسي كنند. مثل اگر دانش‌آموزي به دليل موفقيت‌هاي تحصيلي و يا
انجام كارهاي نيك مورد تحسين و تشويق توسط اوليا و مربيان قرار گيرد، به آن كار
متمايل مي‌گردد و بالعكس، اگر مورد ناسپاسي و بي‌توجهي قرار گيرد، از آن امور
دل‌سرد و نااميد مي‌شود. اميرمؤمنان علي عليه‌السلام در نامه معروف خود به مالك
اشتر مي‌نويسد: «هرگز نيكوكار و بدكردار پيش تو يكسان نباشند؛ زيرا چنين روشي،
<span>نيكوكار را از كار نيك بي‌رغبت ساخته و بدكردار را به كار بد سوق مي‌دهند.</span></p>
<h2 class="gap">مسئوليت خانواده</h2>
<p class="gap">از آن‌جا كه خانواده، اساسي‌ترين واحد اجتماع و نيز مؤثرترين عامل تربيت است،
هماهنگي و تلاش والدين در خانه، بر تلاش و كوشش مربيان در مدرسه مقدم است.
احترام پدر و مادر نسبت به يكديگر و نيز نسبت به فرزندان، باعث مي‌شود كه محيط</p>
<footer>13</footer></div></article>

<article class="sheet"><div class="frame">
<p class="flush">خانواده، محيطي كاملاً صميمي و مهربان شود كه اين خود در تربيت اخلاقي فرزندان و
نيز تحصيلات آن‌ها بسيار مؤثر است. والدين بايد شنوندگان خوبي براي فرزندان‌شان
باشند تا آن‌ها بتوانند به راحتي نظرات، ابتكارات و نيز مشكلات خود را با آن‌ها در
ميان بگذارند و سپس مربيان نيز زمينه را براي باروري استعدادها و ابراز احساسات و
<span class="caret">عواطف آنان فراهم سازند.</span></p>
<footer>14</footer></div></article>
      </div>
    </div>
  </div>
</main>

<footer class="status">
  <span class="page-count">Page 14 of 14</span>
  <span>3232 words</span>
  <button class="display"><svg width="19" height="17" viewBox="0 0 19 17" fill="none" stroke="#444" stroke-width="2"><path d="M17 7V1H1v11h6"/><circle cx="12" cy="11" r="3"/><path d="M12 6v2M12 14v3M7 9l2 1M15 12l3 1M7 14l2-1M15 9l3-1" /></svg>Display Settings</button>
  <button class="focus"><svg width="18" height="17" viewBox="0 0 18 17" fill="none" stroke="#444" stroke-width="2"><path d="M5 3h4l4 4v7H5zM9 3v4h4"/><path d="M4 1H1v3M14 1h3v3M1 13v3h3M17 13v3h-3" stroke-width="1"/></svg>Focus</button>
  <button class="view" aria-label="Read mode"><svg width="18" height="16" viewBox="0 0 18 16" fill="none" stroke="#444" stroke-width="1"><path d="M9 2v13M1 1h6l2 1 2-1h6v13h-6l-2 1-2-1H1z"/><path d="M3 5h4M3 8h4M3 11h4M11 5h4M11 8h4M11 11h4"/></svg></button>
  <button class="view active" aria-label="Print layout"><svg width="15" height="17" viewBox="0 0 15 17" fill="none" stroke="#444"><path d="M1 1h13v15H1z" stroke-width="2"/><path d="M3 4h9M3 6h9M3 9h9M3 11h9M3 13h9" stroke-width="1"/></svg></button>
  <button class="view" aria-label="Web layout"><svg width="18" height="17" viewBox="0 0 18 17" fill="none" stroke="#444"><path d="M7 15H1V1h15v5" stroke-width="2"/><path d="M1 4h15M3 7h6M3 9h4M3 12h3"/><circle cx="12" cy="11" r="5" fill="#f3f2f1" stroke-width="2"/><path d="M7 11h10M12 6v10"/></svg></button>
  <button class="step minus" aria-label="Zoom out"><svg width="10" height="10" viewBox="0 0 10 10" fill="#444"><path d="M0 5h10v1H0z"/></svg></button>
  <input class="zoom" type="range" min="10" max="500" value="36" aria-label="Zoom">
  <button class="step" aria-label="Zoom in"><svg width="10" height="10" viewBox="0 0 10 10" fill="#444"><path d="M0 5h10v1H0zM5 0h1v10H5z"/></svg></button>
  <span class="percent">19%</span>
</footer>
</body>
</html>
```
FILE: styles.css
```css
* { box-sizing: border-box; }
html, body { height: 100%; }
body {
  margin: 0;
  display: flex;
  flex-direction: column;
  background: #e6e6e6;
  color: #444;
  font: 14px/20px "Open Sans", "Noto Sans", "DejaVu Sans", sans-serif;
}
button { font: inherit; color: inherit; background: none; border: 0; padding: 0; margin: 0; }
svg { flex: none; display: block; }

/* Title bar */
.titlebar {
  position: relative;
  display: flex;
  align-items: center;
  height: 43px;
  flex: none;
  padding-bottom: 2px;
  background: #2b579a;
  color: #fff;
  overflow: hidden;
}
.titlebar > * { position: relative; }
.titlebar > .titlebar-art { position: absolute; right: 213px; top: 0; }
.titlebar > .art-right { right: 0; }
.quick { display: flex; align-items: center; padding-left: 26px; width: 375px; flex: none; }
.autosave { color: #4a74b4; width: 71px; }
.toggle {
  display: flex;
  align-items: center;
  gap: 8px;
  width: 47px;
  height: 20px;
  padding-left: 4px;
  border: 1px solid #4a74b4;
  border-radius: 10px;
  color: #4a74b4;
  font-size: 12px;
  margin-right: 16px;
}
.knob { width: 10px; height: 10px; border-radius: 5px; background: #4a74b4; }
.tool { display: flex; }
.save { margin-right: 16px; }
.undo { margin-right: 6px; }
.chev { margin-right: 13px; }
.redo { margin-right: 16px; }
.doc { margin-right: 22px; }
.doc-title { display: flex; align-items: center; gap: 12px; width: 681px; flex: none; }
.fa { font-family: "DejaVu Sans", sans-serif; font-size: 14px; }
.search {
  display: flex;
  align-items: center;
  gap: 19px;
  flex: 1 1 auto;
  height: 31px;
  padding-left: 24px;
  background: #a5b9d1;
  min-width: 0;
}
.search input { font: inherit; border: 0; background: none; outline: 0; flex: 1; min-width: 0; padding: 0; }
.search input::placeholder { color: #17366b; opacity: 1; }
.account { display: flex; align-items: center; justify-content: flex-end; gap: 14px; width: 161px; flex: none; }
.avatar { width: 30px; height: 30px; border-radius: 15px; background: #004e8c; font-size: 12px; line-height: 30px; text-align: center; }
.window { display: flex; justify-content: space-between; align-items: center; width: 242px; flex: none; padding: 0 21px 0 34px; }

/* Ribbon tabs */
.tabs {
  display: flex;
  align-items: center;
  gap: 28px;
  height: 39px;
  flex: none;
  padding: 0 14px 2px 21px;
  background: #f3f2f1;
  font-size: 16px;
}
.tabs a { color: #444; text-decoration: none; }
.tabs a:first-child { margin-right: 8px; }
.share {
  display: flex;
  align-items: center;
  justify-content: center;
  gap: 6px;
  width: 85px;
  height: 30px;
  margin-left: auto;
  border: 1px solid #b8b6b4;
  border-radius: 3px;
  background: #e1dfdd;
  color: #b1afad;
  font-size: 16px;
  font-weight: 600;
}

/* Message bar */
.notice {
  position: relative;
  display: flex;
  align-items: center;
  height: 36px;
  flex: none;
  padding: 0 13px;
  background: #fcf7b6;
  border-top: 1px solid #d4d292;
  border-bottom: 1px solid #d4d292;
  box-shadow: 0 1px 5px #bbb;
  z-index: 1;
}
.notice strong { margin: 0 12px 0 13px; font-weight: 600; }
.enable { width: 138px; height: 26px; margin-left: 28px; border: 1px solid #ababab; background: #fff; }
.dismiss { margin-left: auto; }

/* Canvas and rulers */
.canvas { flex: 1 0 auto; display: flex; flex-direction: column; }
.ruler-row { display: flex; height: 30px; flex: none; padding-right: 19px; }
.tab-kind { position: relative; width: 28px; height: 27px; background: #fff; border: 3px solid #d6d6d6; }
.tab-kind::after { content: ""; position: absolute; left: 7px; top: 9px; width: 7px; height: 7px; border: solid #777; border-width: 0 0 3px 3px; }
.ruler-track { flex: 1; display: flex; justify-content: flex-end; max-width: 974px; margin: 0 auto; }
.hruler { position: relative; display: flex; gap: 1px; width: 190px; height: 21px; padding-top: 5px; font-size: 12px; line-height: 16px; }
.hruler .margin { background: #c6c6c6; }
.hruler .left { width: 21px; }
.hruler .left span { margin-left: -3px; }
.hruler .right { width: 24px; padding-right: 2px; text-align: right; }
.hruler .body { display: flex; flex: 1; padding: 0 8px 0 7px; background: #fff; }
.hruler .body span { flex: 1; text-align: center; }
.marker { position: absolute; left: 0; top: 0; }
.stage { flex: 1; display: flex; align-items: center; }
.workspace { display: flex; flex: 1; padding-right: 19px; }
.vruler {
  align-self: flex-end;
  display: flex;
  flex-direction: column;
  gap: 1px;
  width: 28px;
  height: 271px;
  margin-bottom: -2px;
  padding: 0 6px 0 5px;
  font-size: 12px;
  line-height: 17px;
}
.vruler span { writing-mode: vertical-rl; transform: rotate(180deg); text-align: center; }
.vruler .margin { display: flex; background: #c6c6c6; }
.vruler .top { height: 25px; padding-top: 2px; align-items: flex-start; }
.vruler .bottom { height: 26px; align-items: center; }
.vruler .body { flex: 1; display: flex; flex-direction: column; padding: 8px 0 12px; background: #fff; }
.vruler .body span { flex: 1; }

/* Page thumbnails */
.pages { flex: 1; display: flex; flex-wrap: wrap; justify-content: center; gap: 6px; }
.sheet {
  width: 190px;
  height: 268px;
  padding: 6px 6px 5px;
  background: #fff;
  border: 1px solid #c3c3c3;
}
.frame {
  display: flex;
  flex-direction: column;
  height: 100%;
  padding: 11px 14px 4px 12px;
  border: 3px double #000;
  direction: rtl;
  color: #000;
  font: 4px/9px "DejaVu Sans", sans-serif;
}
.frame p, .frame h2 { margin: 0; font-size: 4px; white-space-collapse: preserve-breaks; text-wrap: nowrap; }
.frame p { text-indent: 11px; text-align-last: justify; }
.frame p + p { margin-top: -1px; }
.frame h2 { font-weight: normal; }
.frame .wide { text-align-last: justify; }
.frame span { display: block; text-indent: 0; text-align-last: start; }
.frame .flush { text-indent: 0; }
.frame .in { padding-right: 14px; }
.frame .out { margin-right: -6px; }
.frame .gap, .frame p + p.gap { margin-top: 2px; }
.frame .blank, .frame p + p.blank { margin-top: 8px; }
.frame .more, .frame p + p.more { margin-top: 14px; }
.frame .double { margin-top: 26px; }
.caret::before { content: ""; float: right; width: 1px; height: 7px; margin-top: 1px; background: #000; }
.frame footer { margin-top: auto; text-align: center; color: #555; }

/* Status bar */
.status {
  display: flex;
  align-items: center;
  height: 27px;
  flex: none;
  padding: 0 17px 0 10px;
  background: #f3f2f1;
  border-top: 1px solid #c6c6c6;
  font-size: 13px;
}
.page-count { width: 105px; }
.display, .focus { display: flex; align-items: center; gap: 2px; }
.display { margin-left: auto; }
.focus { margin: 0 14px 0 18px; }
.view { display: flex; align-items: center; justify-content: center; width: 50px; height: 26px; }
.active { background: #cfcdcb; }
.minus { margin-left: 7px; }
.zoom {
  appearance: none;
  width: 125px;
  height: 14px;
  margin: 0 6px;
  background: linear-gradient(#aaa, #aaa) center / 100% 1px no-repeat, linear-gradient(#aaa, #aaa) center / 1px 8px no-repeat;
}
.zoom::-webkit-slider-thumb { appearance: none; width: 6px; height: 14px; background: #666; }
.percent { width: 40px; text-align: right; }
```
